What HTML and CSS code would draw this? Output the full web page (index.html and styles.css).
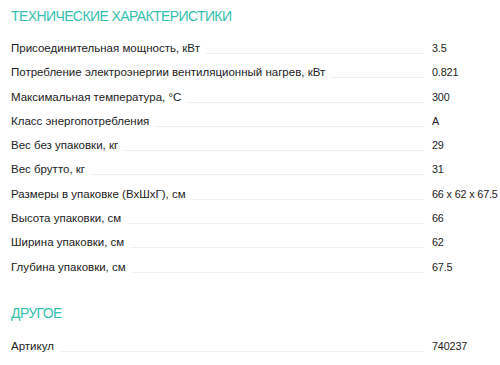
FILE: index.html
```html
<!DOCTYPE html>
<html lang="ru">
<head>
<meta charset="utf-8">
<link rel="stylesheet" href="styles.css">
</head>
<body>
<div class="page">
  <section class="group">
    <h2 class="title">ТЕХНИЧЕСКИЕ ХАРАКТЕРИСТИКИ</h2>
    <ul class="specs">
      <li class="row"><span class="label">Присоединительная мощность, кВт</span><span class="fill"></span><span class="value">3.5</span></li>
      <li class="row"><span class="label">Потребление электроэнергии вентиляционный нагрев, кВт</span><span class="fill"></span><span class="value">0.821</span></li>
      <li class="row"><span class="label">Максимальная температура, °С</span><span class="fill"></span><span class="value">300</span></li>
      <li class="row"><span class="label">Класс энергопотребления</span><span class="fill"></span><span class="value">A</span></li>
      <li class="row"><span class="label">Вес без упаковки, кг</span><span class="fill"></span><span class="value">29</span></li>
      <li class="row"><span class="label">Вес брутто, кг</span><span class="fill"></span><span class="value">31</span></li>
      <li class="row"><span class="label">Размеры в упаковке (ВхШхГ), см</span><span class="fill"></span><span class="value">66 x 62 x 67.5</span></li>
      <li class="row"><span class="label">Высота упаковки, см</span><span class="fill"></span><span class="value">66</span></li>
      <li class="row"><span class="label">Ширина упаковки, см</span><span class="fill"></span><span class="value">62</span></li>
      <li class="row"><span class="label">Глубина упаковки, см</span><span class="fill"></span><span class="value">67.5</span></li>
    </ul>
  </section>
  <section class="group other">
    <h2 class="title">ДРУГОЕ</h2>
    <ul class="specs">
      <li class="row"><span class="label">Артикул</span><span class="fill"></span><span class="value">740237</span></li>
    </ul>
  </section>
</div>
</body>
</html>
```
FILE: styles.css
```css
html, body { margin: 0; padding: 0; background: #fff; }
body { font-family: "Liberation Sans", Arial, sans-serif; color: #222; overflow: hidden; }
.page { padding: 6px 0 0 11px; }
.title {
  margin: 0;
  font-weight: normal;
  font-size: 14px;
  letter-spacing: -0.6px;
  line-height: 20px;
  color: #35bfae;
}
.specs { list-style: none; margin: 14px 0 0; padding: 0; }
.row {
  display: flex;
  align-items: baseline;
  font-size: 11.5px;
  line-height: 16px;
  height: 16px;
  margin-bottom: 8.3px;
}
.label { white-space: nowrap; }
.fill {
  flex: 1;
  margin: 0 8px 0 6px;
  border-bottom: 1px solid #f0f0f0;
  transform: translateY(2px);
}
.value { width: 68px; flex: none; white-space: nowrap; font-size: 10.8px; letter-spacing: -0.15px; }
.other { margin-top: 28px; }
.other .specs { margin-top: 15px; }
```
